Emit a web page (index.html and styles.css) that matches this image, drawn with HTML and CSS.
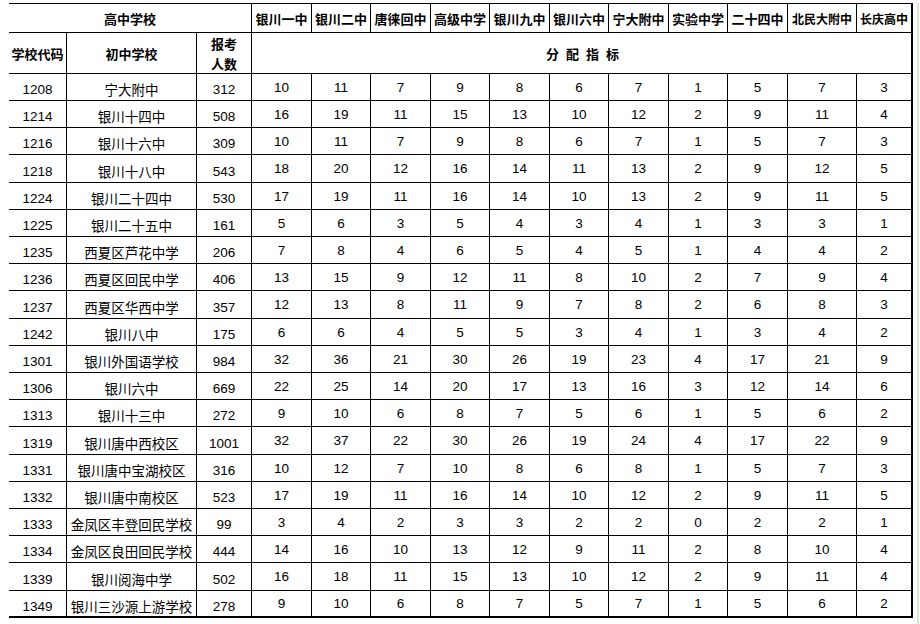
FILE: index.html
```html
<!DOCTYPE html>
<html lang="zh-CN">
<head>
<meta charset="utf-8">
<title>分配指标</title>
<link rel="stylesheet" href="styles.css">
</head>
<body>
<div class="page">
<table class="sheet">
<thead>
<tr>
<th class="hd span3">高中学校</th>
<th class="hd">银川一中</th><th class="hd">银川二中</th><th class="hd">唐徕回中</th><th class="hd">高级中学</th><th class="hd">银川九中</th><th class="hd">银川六中</th><th class="hd">宁大附中</th><th class="hd">实验中学</th><th class="hd">二十四中</th><th class="hd tight">北民大附中</th><th class="hd tight last">长庆高中</th>
</tr>
<tr>
<th class="hd2">学校代码</th><th class="hd2">初中学校</th><th class="hd2 two">报考<br>人数</th><th class="hd2 span11 last">分 配 指 标</th>
</tr>
</thead>
<tbody>
<tr><td class="code">1208</td><td class="name">宁大附中</td><td class="num">312</td><td>10</td><td>11</td><td>7</td><td>9</td><td>8</td><td>6</td><td>7</td><td>1</td><td>5</td><td>7</td><td class="last">3</td></tr>
<tr><td class="code">1214</td><td class="name">银川十四中</td><td class="num">508</td><td>16</td><td>19</td><td>11</td><td>15</td><td>13</td><td>10</td><td>12</td><td>2</td><td>9</td><td>11</td><td class="last">4</td></tr>
<tr><td class="code">1216</td><td class="name">银川十六中</td><td class="num">309</td><td>10</td><td>11</td><td>7</td><td>9</td><td>8</td><td>6</td><td>7</td><td>1</td><td>5</td><td>7</td><td class="last">3</td></tr>
<tr><td class="code">1218</td><td class="name">银川十八中</td><td class="num">543</td><td>18</td><td>20</td><td>12</td><td>16</td><td>14</td><td>11</td><td>13</td><td>2</td><td>9</td><td>12</td><td class="last">5</td></tr>
<tr><td class="code">1224</td><td class="name">银川二十四中</td><td class="num">530</td><td>17</td><td>19</td><td>11</td><td>16</td><td>14</td><td>10</td><td>13</td><td>2</td><td>9</td><td>11</td><td class="last">5</td></tr>
<tr><td class="code">1225</td><td class="name">银川二十五中</td><td class="num">161</td><td>5</td><td>6</td><td>3</td><td>5</td><td>4</td><td>3</td><td>4</td><td>1</td><td>3</td><td>3</td><td class="last">1</td></tr>
<tr><td class="code">1235</td><td class="name">西夏区芦花中学</td><td class="num">206</td><td>7</td><td>8</td><td>4</td><td>6</td><td>5</td><td>4</td><td>5</td><td>1</td><td>4</td><td>4</td><td class="last">2</td></tr>
<tr><td class="code">1236</td><td class="name">西夏区回民中学</td><td class="num">406</td><td>13</td><td>15</td><td>9</td><td>12</td><td>11</td><td>8</td><td>10</td><td>2</td><td>7</td><td>9</td><td class="last">4</td></tr>
<tr><td class="code">1237</td><td class="name">西夏区华西中学</td><td class="num">357</td><td>12</td><td>13</td><td>8</td><td>11</td><td>9</td><td>7</td><td>8</td><td>2</td><td>6</td><td>8</td><td class="last">3</td></tr>
<tr><td class="code">1242</td><td class="name">银川八中</td><td class="num">175</td><td>6</td><td>6</td><td>4</td><td>5</td><td>5</td><td>3</td><td>4</td><td>1</td><td>3</td><td>4</td><td class="last">2</td></tr>
<tr><td class="code">1301</td><td class="name">银川外国语学校</td><td class="num">984</td><td>32</td><td>36</td><td>21</td><td>30</td><td>26</td><td>19</td><td>23</td><td>4</td><td>17</td><td>21</td><td class="last">9</td></tr>
<tr><td class="code">1306</td><td class="name">银川六中</td><td class="num">669</td><td>22</td><td>25</td><td>14</td><td>20</td><td>17</td><td>13</td><td>16</td><td>3</td><td>12</td><td>14</td><td class="last">6</td></tr>
<tr><td class="code">1313</td><td class="name">银川十三中</td><td class="num">272</td><td>9</td><td>10</td><td>6</td><td>8</td><td>7</td><td>5</td><td>6</td><td>1</td><td>5</td><td>6</td><td class="last">2</td></tr>
<tr><td class="code">1319</td><td class="name">银川唐中西校区</td><td class="num">1001</td><td>32</td><td>37</td><td>22</td><td>30</td><td>26</td><td>19</td><td>24</td><td>4</td><td>17</td><td>22</td><td class="last">9</td></tr>
<tr><td class="code">1331</td><td class="name">银川唐中宝湖校区</td><td class="num">316</td><td>10</td><td>12</td><td>7</td><td>10</td><td>8</td><td>6</td><td>8</td><td>1</td><td>5</td><td>7</td><td class="last">3</td></tr>
<tr><td class="code">1332</td><td class="name">银川唐中南校区</td><td class="num">523</td><td>17</td><td>19</td><td>11</td><td>16</td><td>14</td><td>10</td><td>12</td><td>2</td><td>9</td><td>11</td><td class="last">5</td></tr>
<tr><td class="code">1333</td><td class="name">金凤区丰登回民学校</td><td class="num">99</td><td>3</td><td>4</td><td>2</td><td>3</td><td>3</td><td>2</td><td>2</td><td>0</td><td>2</td><td>2</td><td class="last">1</td></tr>
<tr><td class="code">1334</td><td class="name">金凤区良田回民学校</td><td class="num">444</td><td>14</td><td>16</td><td>10</td><td>13</td><td>12</td><td>9</td><td>11</td><td>2</td><td>8</td><td>10</td><td class="last">4</td></tr>
<tr><td class="code">1339</td><td class="name">银川阅海中学</td><td class="num">502</td><td>16</td><td>18</td><td>11</td><td>15</td><td>13</td><td>10</td><td>12</td><td>2</td><td>9</td><td>11</td><td class="last">4</td></tr>
<tr class="final"><td class="code">1349</td><td class="name">银川三沙源上游学校</td><td class="num">278</td><td>9</td><td>10</td><td>6</td><td>8</td><td>7</td><td>5</td><td>7</td><td>1</td><td>5</td><td>6</td><td class="last">2</td></tr>
</tbody>
</table>
<div class="edge"></div>
</div>
</body>
</html>
```
FILE: styles.css
```css
html, body {
  margin: 0;
  padding: 0;
  background: #ffffff;
}

.page {
  display: flex;
  align-items: stretch;
  height: 621px;
  padding: 3px 0 0 9px;
}

.sheet {
  display: grid;
  grid-template-columns: 58px 130px 55px 60px 59px 60px 59px 60px 59px 60px 59px 60px 69px 56px;
  grid-template-rows: 29px 41px 27px 27px 27px 28px 27px 27px 27px 27px 28px 27px 27px 27px 27px 28px 27px 27px 27px 27px 28px 27px;
  border-top: 1px solid #000;
  border-collapse: separate;
  border-spacing: 0;
  align-self: flex-start;
  font-family: "Liberation Sans", Arial, "Noto Sans CJK SC", sans-serif;
  color: #000;
}

.sheet thead,
.sheet tbody,
.sheet tr {
  display: contents;
}

.sheet th,
.sheet td {
  box-sizing: border-box;
  display: flex;
  align-items: center;
  justify-content: center;
  padding: 0;
  border-right: 1px solid #000;
  border-bottom: 1px solid #000;
  text-align: center;
  white-space: nowrap;
  font-size: 13.5px;
  font-weight: 400;
}

.sheet .hd,
.sheet .hd2 {
  font-family: "Noto Sans CJK SC", sans-serif;
  font-weight: 700;
  font-size: 13px;
  letter-spacing: 0;
}

.sheet .hd.tight {
  font-size: 12px;
}

.sheet .hd2.two {
  line-height: 20px;
  padding-top: 1px;
}

.sheet .span3 {
  grid-column: span 3;
}

.sheet .span11 {
  grid-column: span 11;
  letter-spacing: 2px;
  padding-left: 4px;
}

.sheet .last {
  border-right-width: 2px;
}

.sheet .final td {
  border-bottom-width: 2px;
}

.sheet .code,
.sheet .num {
  padding-top: 5px;
}

.sheet .name {
  font-family: "Noto Sans CJK SC", sans-serif;
  font-size: 13.5px;
  padding-top: 4px;
}

.edge {
  width: 2px;
  margin-left: 4px;
  background: #d9ead0;
}
```
